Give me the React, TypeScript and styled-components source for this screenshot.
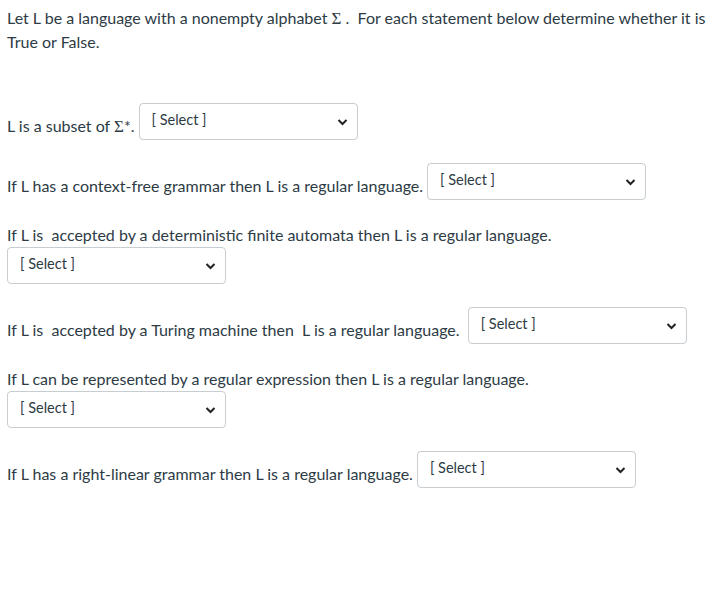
import React from "react";
import styled, { createGlobalStyle } from "styled-components";

const Global = createGlobalStyle`
  body { margin: 0; background: #fff; font-family: Lato, "Open Sans", sans-serif; color: #2d3b45; }
`;

const Page = styled.div`
  padding: 6px 7px 0 7px;
  width: 720px;
  box-sizing: border-box;
`;

const Intro = styled.p`
  margin: 0 0 50px 0;
  font-size: 16px;
  line-height: 23px;
`;

const List = styled.div`
  display: flex;
  flex-direction: column;
  gap: 23px;
`;

const Row = styled.div<{ $stack?: boolean }>`
  display: flex;
  flex-direction: ${(p) => (p.$stack ? "column" : "row")};
  align-items: ${(p) => (p.$stack ? "flex-start" : "center")};
  gap: ${(p) => (p.$stack ? "1px" : "4px")};
  font-size: 16px;
  line-height: 23px;
`;

const Label = styled.span<{ $drop?: boolean }>`
  padding-top: ${(p) => (p.$drop ? "8px" : "0")};
  white-space: pre;
`;

const Sigma = styled.span`
  font-family: "Liberation Serif", serif;
  font-size: 17px;
`;

const SelectBox = styled.div`
  width: 219px;
  height: 37px;
  box-sizing: border-box;
  border: 1px solid #c7cdd1;
  border-radius: 4px;
  background: #fff;
  display: flex;
  align-items: center;
  justify-content: space-between;
  padding: 0 9px 4px 12px;
  font-size: 14.5px;
  color: #2d3b45;
`;

const Chevron = () => (
  <svg width="11" height="8" viewBox="0 0 11 8" style={{ marginTop: 4 }}>
    <path d="M1.5 2 L5.5 6 L9.5 2" fill="none" stroke="#222" strokeWidth="2" />
  </svg>
);

const Select = () => (
  <SelectBox>
    <span>[ Select ]</span>
    <Chevron />
  </SelectBox>
);

export default function App() {
  return (
    <Page>
      <Global />
      <Intro>
        Let L be a language with a nonempty alphabet <Sigma>Σ</Sigma> .&nbsp; For each statement below determine whether it is
        True or False.
      </Intro>
      <List>
        <Row>
          <Label $drop>
            L is a subset of <Sigma>Σ</Sigma>*.
          </Label>
          <Select />
        </Row>
        <Row>
          <Label $drop>If L has a context-free grammar then L is a regular language.</Label>
          <Select />
        </Row>
        <Row $stack>
          <Label>If L is  accepted by a deterministic finite automata then L is a regular language.</Label>
          <Select />
        </Row>
        <Row>
          <Label $drop>If L is  accepted by a Turing machine then  L is a regular language. </Label>
          <Select />
        </Row>
        <Row $stack>
          <Label>If L can be represented by a regular expression then L is a regular language.</Label>
          <Select />
        </Row>
        <Row>
          <Label $drop>If L has a right-linear grammar then L is a regular language.</Label>
          <Select />
        </Row>
      </List>
    </Page>
  );
}
